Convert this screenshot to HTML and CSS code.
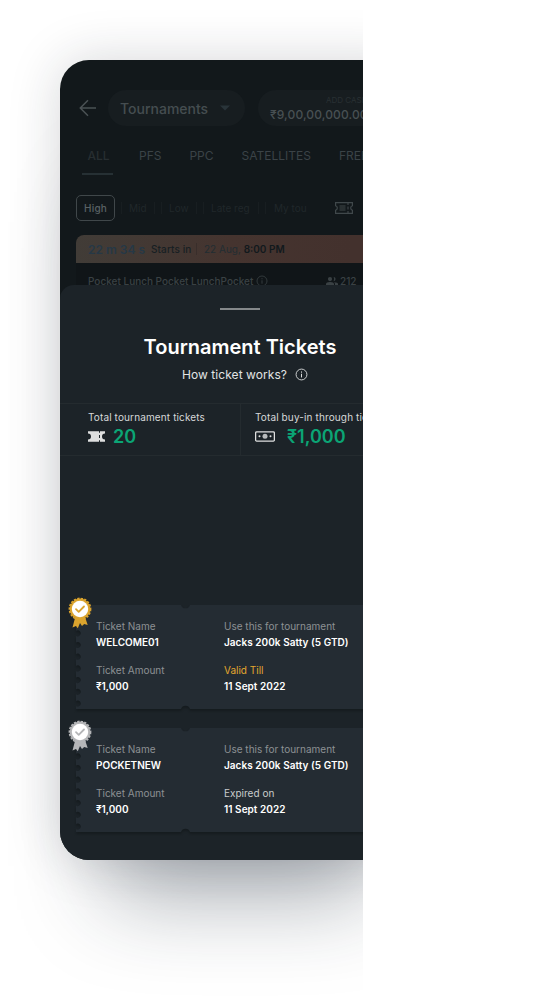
FILE: index.html
```html
<!DOCTYPE html>
<html lang="en">
<head>
<meta charset="utf-8">
<title>Tournament Tickets</title>
<link rel="stylesheet" href="styles.css">
</head>
<body>
<svg class="defs" width="0" height="0">
  <symbol id="info" viewBox="0 0 12 12"><circle cx="6" cy="6" r="5" fill="none" stroke="currentColor" stroke-width=".8"/><path d="M6 5.3V8.7M6 3.2V4.3" stroke="currentColor" stroke-width=".9"/></symbol>
  <symbol id="badge" viewBox="0 0 24 32">
    <path d="M7 21 4.5 30.5 8 29 9.8 31.3 12 26 14 29 16.2 27 19.7 28 17 20Z" fill="currentColor"/>
    <circle cx="12" cy="12" r="10.4" fill="currentColor"/>
    <circle cx="12" cy="12" r="10.6" fill="none" stroke="currentColor" stroke-width="1.6" stroke-dasharray="2.3 1.3"/>
    <circle cx="12" cy="12" r="8.2" fill="#fff"/>
    <path d="M8 12.2 10.7 14.8 16 9.5" fill="none" stroke="currentColor" stroke-width="1.8" stroke-linecap="round" stroke-linejoin="round"/>
  </symbol>
  <symbol id="ticket" viewBox="0 0 360 106">
    <path d="M0 0H105A4.7 4.7 0 0 0 114 0H360V104H114A4.7 4.7 0 0 0 105 104H0V101A3 3 0 1 0 0 96V89.3A3 3 0 1 0 0 84.3V77.6A3 3 0 1 0 0 72.6V65.9A3 3 0 1 0 0 60.9V54.2A3 3 0 1 0 0 49.2V42.5A3 3 0 1 0 0 37.5V30.8A3 3 0 1 0 0 25.8Z"/>
  </symbol>
</svg>
<div class="stage">
  <main class="phone">
    <header class="topbar">
      <svg class="back" viewBox="0 0 18 18" width="18" height="18"><path d="M17 9H1.5M9 1.3 1.3 9 9 16.7" fill="none" stroke="#4a5154" stroke-width="1.5"/></svg>
      <div class="pill select"><span class="select-label">Tournaments</span><svg width="10" height="6" viewBox="0 0 10 6"><path d="M0 .5H10L5 5.5Z" fill="#293439"/></svg></div>
      <div class="pill balance"><span class="add">ADD CASH</span><span class="amount">₹9,00,00,000.00</span></div>
    </header>
    <nav class="tabs"><span class="tab active">ALL</span><span class="tab">PFS</span><span class="tab">PPC</span><span class="tab">SATELLITES</span><span class="tab">FREEROLLS</span></nav>
    <div class="filters">
      <span class="chip on">High</span><span class="chip mid">Mid</span><span class="chip low">Low</span><span class="chip late">Late reg</span><span class="chip tour">My tour</span>
      <svg class="filter-ticket" width="18" height="12" viewBox="0 0 18 12"><path d="M.6.6H17.4V3.7A2.4 2.4 0 0 0 17.4 8.3V11.4H.6V8.3A2.4 2.4 0 0 0 .6 3.7Z" fill="none" stroke="#40484b" stroke-width="1.2"/><path d="M13 1V3M13 4.5V7.5M13 9V11M4.5 4H10.5M4.5 6H10.5M4.5 8H10.5" stroke="#40484b" stroke-width="1.1"/></svg>
    </div>
    <section class="event">
      <div class="banner"><b class="count">22 m 34 s</b><span class="starts">Starts in</span><span class="date">22 Aug, <b>8:00 PM</b></span></div>
      <div class="event-name"><span class="event-title">Pocket Lunch Pocket LunchPocket</span><svg width="12" height="12"><use href="#info"/></svg>
        <span class="players"><svg width="12" height="9" viewBox="0 0 12 9"><path d="M4 0A2 2 0 1 1 4 4.2 2 2 0 1 1 4 0M7.5 0A2 2 0 1 1 7.5 4.2Q8.8 2 7.5 0M0 9V7Q0 5 4 5T8 7V9ZM9 9V7Q9 6 8 5.2 12 5.3 12 7V9Z" fill="currentColor"/></svg>212</span></div>
    </section>
    <section class="sheet">
      <div class="handle"></div>
      <h1 class="title">Tournament Tickets</h1>
      <div class="how"><span>How ticket works?</span><svg width="13" height="13"><use href="#info"/></svg></div>
      <div class="stats">
        <div class="stat"><span class="stat-label">Total tournament tickets</span>
          <div class="stat-row"><svg width="17" height="11" viewBox="0 0 17 11"><path d="M0 .3H11V1.7H12V.3H17V2.5A3 3 0 0 0 17 8.5V10.7H12V9.3H11V10.7H0V8.5A3 3 0 0 0 0 2.5ZM11 4V7H12V4Z" fill="#dedfdf" fill-rule="evenodd"/></svg><strong class="stat-value">20</strong></div></div>
        <div class="stat second"><span class="stat-label">Total buy-in through tickets</span>
          <div class="stat-row"><svg width="20" height="11" viewBox="0 0 20 11"><rect x=".6" y=".9" width="18.8" height="9.2" rx="1" fill="none" stroke="#dedfdf" stroke-width="1.3"/><circle cx="10" cy="5.3" r="2.5" fill="#b8bbbc"/><circle cx="4.5" cy="5.3" r="1" fill="#dedfdf"/><circle cx="15.5" cy="5.3" r="1" fill="#dedfdf"/></svg><strong class="stat-value">₹1,000</strong></div></div>
      </div>
      <div class="tickets">
        <article class="ticket">
          <svg class="shape" width="360" height="106"><use href="#ticket"/></svg>
          <svg class="badge gold" width="24" height="32"><use href="#badge"/></svg>
          <div class="cell"><span class="label">Ticket Name</span><strong class="value">WELCOME01</strong></div>
          <div class="cell"><span class="label">Use this for tournament</span><strong class="value wide">Jacks 200k Satty (5 GTD)</strong></div>
          <div class="cell"><span class="label">Ticket Amount</span><strong class="value">₹1,000</strong></div>
          <div class="cell"><span class="label valid">Valid Till</span><strong class="value wide">11 Sept 2022</strong></div>
        </article>
        <article class="ticket">
          <svg class="shape" width="360" height="106"><use href="#ticket"/></svg>
          <svg class="badge silver" width="24" height="32"><use href="#badge"/></svg>
          <div class="cell"><span class="label">Ticket Name</span><strong class="value">POCKETNEW</strong></div>
          <div class="cell"><span class="label">Use this for tournament</span><strong class="value wide">Jacks 200k Satty (5 GTD)</strong></div>
          <div class="cell"><span class="label">Ticket Amount</span><strong class="value">₹1,000</strong></div>
          <div class="cell"><span class="label expired">Expired on</span><strong class="value wide">11 Sept 2022</strong></div>
        </article>
      </div>
    </section>
  </main>
</div>
</body>
</html>
```
FILE: styles.css
```css
* { box-sizing: border-box; }
body { margin: 0; background: #fff; font-family: Inter, "Open Sans", sans-serif; }
svg { display: block; flex: none; }
.defs { position: absolute; }
.stage { width: 363px; height: 1000px; overflow: hidden; padding: 60px 0 0 60px; }
.phone { width: 360px; height: 800px; border-radius: 29px; background: #12181b; overflow: hidden; white-space: nowrap; display: flex; flex-direction: column;
  box-shadow: 0 0 52px rgba(27,34,45,.18), 0 84px 90px -48px rgba(27,40,55,.38); }
.topbar { display: flex; align-items: center; padding: 30px 0 0 19px; height: 66px; flex: none; }
.back { margin-right: 11px; }
.pill { height: 36px; border-radius: 18px; background: #171d20; flex: none; }
.select { width: 137px; display: flex; align-items: center; justify-content: space-between; padding: 0 15px 0 12px; margin-right: 13px; color: #454d50; font-size: 14px; font-weight: 500; }
.balance { width: 150px; padding: 4px 12px; display: flex; flex-direction: column; color: #485053; }
.add { font-size: 8px; line-height: 12px; padding-left: 56px; color: #293033; }
.amount { font-size: 12px; line-height: 17px; font-weight: 500; letter-spacing: .12px; }
.tabs { display: flex; height: 49px; flex: none; padding: 20px 0 0 22px; font-size: 12px; line-height: 19px; color: #3b4347; gap: 28px; }
.tab.active { width: 31px; height: 29px; margin-right: -2px; padding-left: 2px; text-align: center; border-bottom: 2px solid #263034; color: #272e31; font-weight: 500; }
.filters { display: flex; align-items: center; height: 26px; flex: none; margin: 20px 0 14px 16px; font-size: 10px; color: #20272a; }
.chip { flex: none; }
.chip.on { width: 39px; height: 26px; line-height: 25px; text-align: center; border: 1px solid #40474a; border-radius: 5px; color: #596164; font-weight: 500; letter-spacing: .15px; }
.mid { margin-left: 6px; padding-left: 7px; width: 34px; border: solid #181e21; border-width: 0 1px; }
.low { margin-left: 6px; padding-left: 7px; width: 36px; border: solid #181e21; border-width: 0 1px; }
.late { margin-left: 6px; padding-left: 7px; width: 56px; border: solid #181e21; border-width: 0 1px; }
.tour { margin-left: 6px; padding-left: 8px; width: 42px; overflow: hidden; border-left: 1px solid #181e21; }
.filter-ticket { margin-left: 28px; }
.event { margin-left: 16px; height: 50px; flex: none; background: #101518; border-radius: 8px 0 0; overflow: hidden; }
.banner { height: 28px; display: flex; align-items: center; padding-left: 12px; background: linear-gradient(90deg, #413c37 0, #45342f 45%, #43312d 80%); color: #171f23; font-size: 10px; }
.count { width: 63px; font-size: 12px; font-weight: 600; color: #263846; }
.starts { width: 45px; font-weight: 500; letter-spacing: .1px; }
.date { color: #222d32; border-left: 1px solid #392e2b; padding-left: 7px; }
.date b { color: #11191d; font-weight: 600; }
.event-name { display: flex; align-items: center; height: 36px; padding-left: 12px; font-size: 10px; color: #3a4144; font-weight: 500; }
.event-title { width: 168px; }
.players { display: flex; align-items: center; gap: 2px; margin-left: 58px; }
.sheet { height: 575px; flex: none; background: #1c2328; border-radius: 14px 14px 0 0; display: flex; flex-direction: column; color: #fff; }
.handle { width: 40px; height: 2px; background: #85898b; margin: 23px auto 0; flex: none; }
.title { margin: 25px 0 0; font-size: 20px; line-height: 24px; font-weight: 600; text-align: center; }
.how { margin-top: 6px; height: 18px; display: flex; align-items: center; justify-content: center; gap: 8px; padding-left: 10px; font-size: 12px; letter-spacing: .07px; color: #e2e4e4; }
.stats { display: flex; height: 53px; margin-top: 20px; border: solid #242b2f; border-width: 1px 0; flex: none; }
.stat { width: 181px; flex: none; padding: 6px 0 0 28px; border-right: 1px solid #242b2f; }
.stat.second { padding-left: 14px; border: 0; }
.stat-label { display: block; font-size: 10px; line-height: 14px; letter-spacing: .13px; color: #d6d8d9; }
.stat-row { display: flex; align-items: center; height: 24px; gap: 8px; }
.second .stat-row { gap: 12px; }
.stat-value { color: #0ba575; font-size: 18px; font-weight: 600; }
.tickets { display: grid; gap: 19px; padding: 149px 0 0 16px; }
.ticket { position: relative; height: 104px; display: grid; grid-template-columns: 128px 180px; grid-template-rows: 44px 32px; padding: 13px 20px; isolation: isolate; }
.shape { position: absolute; left: 0; top: 0; z-index: -1; fill: #242c33; filter: drop-shadow(0 2px 1px #151b1e); overflow: visible; }
.badge { position: absolute; left: -8.5px; top: -8.5px; overflow: visible; }
.gold { color: #dba42e; }
.silver { color: #b5b6b8; }
.label, .value { display: block; font-size: 10px; line-height: 16px; }
.label { color: #8d9193; }
.valid { color: #e3a72e; }
.expired { color: #c9cccd; }
.value { color: #fff; font-weight: 600; }
.wide { letter-spacing: .04px; }
```
